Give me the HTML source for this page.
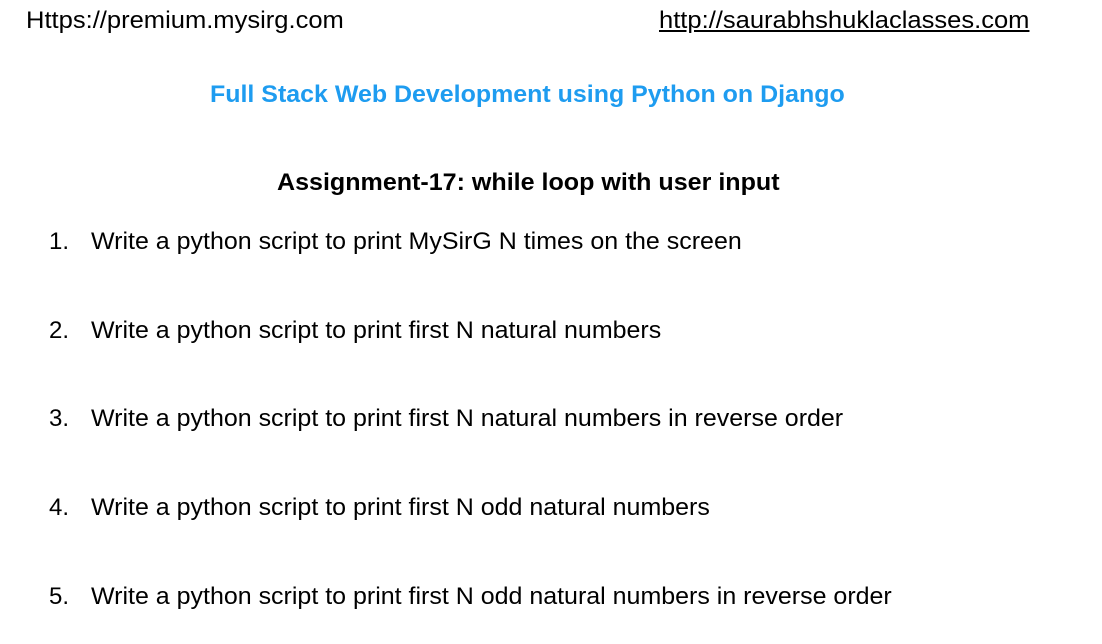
<!DOCTYPE html>
<html><head><style>
body{margin:0;width:1102px;height:644px;background:#fff;font-family:"Liberation Sans",Arial,sans-serif;color:#000;position:relative;overflow:hidden}
.a{position:absolute;white-space:nowrap;transform-origin:0 0;font-size:24px}
.i{transform:scaleX(1.041)}
</style></head><body>
<div class="a" style="left:26px;top:7px;transform:scaleX(1.064)">Https://premium.mysirg.com</div>
<div class="a" style="left:659px;top:7px;text-decoration:underline;transform:scaleX(1.064)">http://saurabhshuklaclasses.com</div>
<div class="a" style="left:210px;top:81px;font-weight:bold;color:#1e9cf0;transform:scaleX(1.04)">Full Stack Web Development using Python on Django</div>
<div class="a" style="left:277px;top:169px;font-weight:bold;transform:scaleX(1.044)">Assignment-17: while loop with user input</div>
<div class="a" style="left:49px;top:228px">1.</div><div class="a i" style="left:91px;top:228px">Write a python script to print MySirG N times on the screen</div>
<div class="a" style="left:49px;top:317px">2.</div><div class="a i" style="left:91px;top:317px">Write a python script to print first N natural numbers</div>
<div class="a" style="left:49px;top:405px">3.</div><div class="a i" style="left:91px;top:405px">Write a python script to print first N natural numbers in reverse order</div>
<div class="a" style="left:49px;top:494px">4.</div><div class="a i" style="left:91px;top:494px">Write a python script to print first N odd natural numbers</div>
<div class="a" style="left:49px;top:583px">5.</div><div class="a i" style="left:91px;top:583px">Write a python script to print first N odd natural numbers in reverse order</div>
</body></html>
